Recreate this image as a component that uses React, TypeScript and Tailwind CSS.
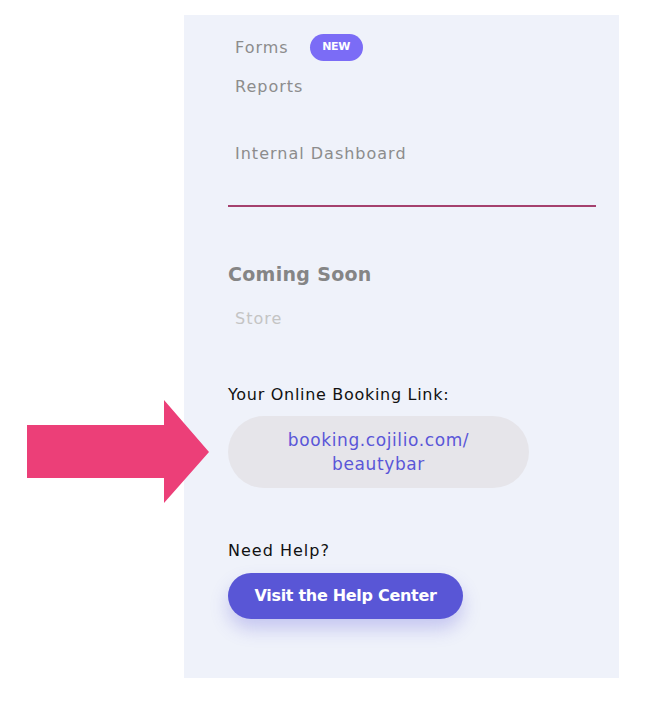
import React from 'react';

const font = { fontFamily: '"DejaVu Sans", "Noto Sans", sans-serif' };

const Arrow: React.FC = () => (
  <svg className="absolute left-[27px] top-[400px]" width="183" height="104" viewBox="0 0 183 104">
    <polygon points="0,25 137,25 137,0 182,52 137,103 137,78 0,78" fill="#ec3f78" />
  </svg>
);

export default function App() {
  return (
    <div className="relative w-[663px] h-[702px] bg-white" style={font}>
      <div className="ml-[184px] pt-[15px]">
        <div className="w-[435px] h-[663px] bg-[#eff2fa] pl-[44px] pr-[23px] flex flex-col">
          <div className="flex items-center gap-[21px] h-[27px] mt-[19px] pl-[7px]">
            <span className="text-[16px] text-[#8c8c8c] tracking-[1px]">Forms</span>
            <span className="h-[27px] w-[53px] rounded-full bg-[#7b6cf6] text-white text-[11px] font-bold flex items-center justify-center tracking-[-0.3px]">NEW</span>
          </div>
          <div className="pl-[7px] mt-[14px] text-[16px] text-[#8c8c8c] leading-[24px] tracking-[1px]">Reports</div>
          <div className="pl-[7px] mt-[43px] text-[16px] text-[#8c8c8c] leading-[24px] tracking-[1px]">Internal Dashboard</div>
          <div className="mt-[39px] h-[2px] bg-[#a5416e] w-[368px]" />
          <div className="mt-[54px] text-[19px] font-bold text-[#858585] leading-[26px] tracking-[0.3px]">Coming Soon</div>
          <div className="pl-[7px] mt-[20px] text-[16px] text-[#c4c4c4] leading-[24px] tracking-[1px]">Store</div>
          <div className="mt-[52px] text-[16px] text-[#111111] leading-[24px] tracking-[0.7px]">Your Online Booking Link:</div>
          <div className="mt-[9px] w-[301px] h-[72px] rounded-[36px] bg-[#e6e5ea] flex flex-col items-center justify-center text-[17px] text-[#5a56d8] leading-[24px] tracking-[0.6px]">
            <span>booking.cojilio.com/</span>
            <span>beautybar</span>
          </div>
          <div className="mt-[51px] text-[16px] text-[#111111] leading-[24px] tracking-[1px]">Need Help?</div>
          <button className="mt-[10px] w-[235px] h-[46px] rounded-full bg-[#5956d6] text-white text-[16px] font-bold tracking-[-0.3px] shadow-[0_10px_18px_rgba(89,86,214,0.28)]">
            Visit the Help Center
          </button>
        </div>
      </div>
      <Arrow />
    </div>
  );
}
